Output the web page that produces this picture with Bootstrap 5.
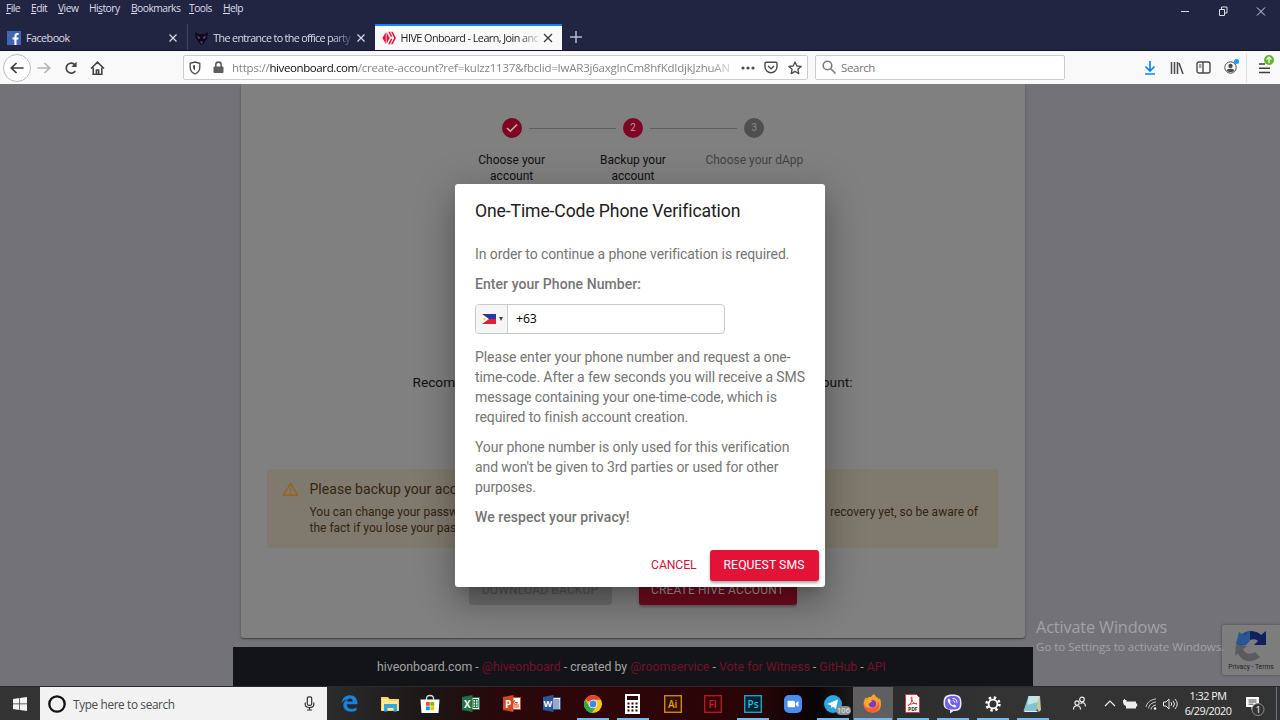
<!DOCTYPE html>
<html lang="en">

<head>
  <meta charset="UTF-8">
  <title>HIVE Onboard - Learn, Join and</title>
  <meta name="viewport" content="width=device-width, initial-scale=1.0" />
  <link href="https://cdn.jsdelivr.net/npm/bootstrap@5.3.0/dist/css/bootstrap.min.css" rel="stylesheet" />
  <style>
    body {
      width: 1280px;
      height: 720px;
      font-family: "Open Sans", "Noto Sans", sans-serif;
      font-size: 11px;
      line-height: 16px;
      background: #737277;
    }

    svg { display: block; flex: none; }

    /* window frame */
    .titlebar { height: 51px; background: #222542; color: #dcdce8; border-bottom: 1px solid #10112b; }
    .menus { height: 24px; padding-left: 6px; font-size: 10.3px; letter-spacing: -.55px; }
    .menus span { line-height: 16px; }
    .menus u { text-underline-offset: 1px; }
    .win-btns { padding: 4px 14px 0 0; gap: 28px; }
    .tabs { height: 26px; }
    .tab { height: 26px; width: 187.3px; padding: 1px 9px 0 7px; font-size: 10.8px; letter-spacing: -.55px; }
    .tab .label { flex: 1; margin: 0 5px 0 5px; white-space: nowrap; overflow: hidden; }
    .tab .fade-end { -webkit-mask-image: linear-gradient(90deg, #000 85%, transparent 103%); }
    .tab.split { border-left: 1px solid #40425c; }
    .tab.split .label { letter-spacing: -.68px; margin-right: 4px; }
    .tab.active { background: #f9f9fa; color: #1c1c22; border-top: 2px solid #0a84ff; padding-top: 0; }

    .toolbar { height: 33px; background: #f9f9fa; color: #4a4a4f; }
    .back { width: 28px; height: 28px; border: 1px solid #bcbcbe; border-radius: 50%; background: #fff; margin-left: 3px; }
    .field { height: 25px; background: #fff; border: 1px solid #ccccce; border-radius: 2px; font-size: 11.5px; }
    .urlbar { width: 625px; margin-left: 78px; padding: 0 5px 0 5px; }
    .urltext { width: 502px; margin: 0 7px 0 8px; color: #85858a; white-space: nowrap; overflow: hidden; letter-spacing: -.22px;
      -webkit-mask-image: linear-gradient(90deg, #000 95%, transparent 101%); }
    .urltext b { font-weight: 400; color: #0c0c0d; letter-spacing: -.4px; }
    .searchbar { width: 250px; margin-left: 7px; padding-left: 6px; color: #77777b; letter-spacing: -.4px; }
    .alert-dot { position: absolute; border-radius: 50%; }

    /* page */
    .viewport { height: 602px; position: relative; overflow: hidden; font-family: Roboto, sans-serif; }
    .page { width: 1265px; }
    .sheet { width: 784px; height: 554px; background: #808080; border-radius: 0 0 3px 3px; padding: 34px 26px 0;
      box-shadow: 0 1px 1px rgba(0, 0, 0, .3), 0 1px 3px rgba(0, 0, 0, .2); }
    .steps { width: 364px; height: 255px; margin-left: 1px; color: #111; font-size: 12px; line-height: 16.7px; }
    .step { flex: 1; position: relative; text-align: center; }
    .step + .step::before { content: ""; position: absolute; top: 10px; left: calc(-50% + 17px); right: calc(50% + 17px); border-top: 1px solid #5f5f5f; }
    .dot { width: 20px; height: 20px; border-radius: 50%; background: #7f0623; color: #b5a0a5; margin: 0 auto 13.5px; font-size: 10px; }
    .step.off { color: #434343; }
    .step.off .dot { background: #4f4f4f; color: #8b8b8b; }
    .step p { width: 80px; margin: 0 auto; }
    .step.off p { width: auto; }
    .recom { width: 440px; height: 96px; color: #111; font-size: 13.7px; line-height: 19px; }
    .notice { width: 731px; height: 79px; background: #807a6e; border-radius: 3px; color: #33240f; padding: 9.5px 20px 0 15px; }
    .notice h6 { font-size: 14px; font-weight: 400; line-height: 20px; margin: 0 0 5px; letter-spacing: .03px; }
    .notice p { font-size: 12px; line-height: 16.7px; margin: 0; letter-spacing: 0; }
    .acts { padding-top: 27px; padding-right: 0; gap: 27px; }
    .act { height: 30px; border-radius: 3px; font-size: 12px; letter-spacing: .15px; line-height: 31px; text-align: center; }
    .act.dl { width: 143px; background: #6d6d6d; color: #525252; }
    .act.create { width: 158px; background: #720a20; color: #a99; box-shadow: 0 2px 2px rgba(0, 0, 0, .25); }
    .foot { width: 800px; height: 40px; margin-top: 9px; background: #121417; color: #a3a3a3; font-size: 12.34px; line-height: 40px; text-align: center; padding-right: 2px; }
    .foot a { color: #75102a; text-decoration: none; }

    .overlay { position: absolute; inset: 0; padding-top: 1px; }
    .dialog { width: 370px; height: 403px; background: #fff; border-radius: 3px; color: #757575; padding: 0 20px;
      font-size: 14px; line-height: 20px; letter-spacing: -.09px;
      box-shadow: 0 9px 12px -6px rgba(0, 0, 0, .2), 0 20px 32px 2px rgba(0, 0, 0, .14), 0 7px 38px 7px rgba(0, 0, 0, .14); }
    .dialog h2 { font-size: 17.6px; line-height: 27px; margin: 14px 0 19px; color: #202020; font-weight: 400; letter-spacing: -.12px; }
    .dialog p { margin: 0 0 10px; }
    .dialog strong { font-weight: 500; letter-spacing: .06px; }
    .phone { width: 250px; height: 30px; border: 1px solid #cacaca; border-radius: 4px; margin-bottom: 13px; color: #000; }
    .country { width: 32px; background: #f5f5f5; border-right: 1px solid #cacaca; border-radius: 3px 0 0 3px; padding-left: 6px; gap: 3px; }
    .phone .num { padding-left: 8px; font-family: "Open Sans", sans-serif; font-size: 12.3px; letter-spacing: -.1px; }
    .dialog .btns { margin: 23px -13.5px 0 0; font-size: 12.2px; letter-spacing: .08px; line-height: 31px; }
    .dialog .cancel { color: #d0103a; margin-right: 13px; letter-spacing: -.1px; }
    .dialog .sms { width: 109px; height: 31px; text-align: center; border-radius: 3px; background: #e31337; color: #fff; box-shadow: 0 2px 3px rgba(0, 0, 0, .35); }

    .activate { position: absolute; left: 1036px; top: 533px; color: #a2a2a6; font-family: "Open Sans", sans-serif; white-space: nowrap; }
    .activate .big { font-size: 16.3px; line-height: 20px; letter-spacing: -.15px; }
    .activate .sub { font-size: 11.6px; line-height: 20px; letter-spacing: -.05px; }
    .captcha { position: absolute; right: 0; top: 541px; width: 58px; height: 50px; background: #7d7d7d; border-radius: 2px 0 0 2px; box-shadow: 0 0 3px #444;
      font-size: 6.7px; line-height: 9px; color: #222; }

    /* taskbar */
    .taskbar { height: 34px; border-top: 1px solid #2a2a2a; color: #f4f4f4;
      background: linear-gradient(90deg, #343434 0, #2b2b2b 330px, #1c1516 430px, #28090b 490px, #2f0508 600px, #270406 760px, #090405 815px, #2c2c2c 890px, #333 1000px); }
    .start { width: 40px; }
    .ask { width: 287px; background: #f2f2f2; color: #4a4a4a; padding: 0 12px 0 8px; font-size: 11.8px; letter-spacing: -.36px; }
    .apps { width: 724px; margin-left: 2px; }
    .app { width: 40px; flex: none; position: relative; }
    .app:nth-child(-n+6) { margin-right: .67px; }
    .app.run::after { content: ""; position: absolute; bottom: 0; left: 4px; right: 4px; height: 2px; background: #76b9ed; }
    .app.on { background: #5f5f60; }
    .app.on::after { left: 1px; right: 1px; }
    .count { position: absolute; right: 2px; bottom: 5px; background: #8b8f92; color: #eee; font-size: 7.5px; line-height: 9px; border-radius: 5px; padding: 0 1px; }
    .tray { margin-left: 19px; width: 104px; }
    .clock { width: 64px; margin-left: 0; font-size: 10.8px; line-height: 15px; text-align: center; letter-spacing: -.5px; padding-top: 1px; }
  </style>
</head>

<body class="m-0 overflow-hidden d-flex flex-column">
  <!-- Title bar -->
  <header class="titlebar">
    <div class="menus d-flex justify-content-between">
      <div class="d-flex">
        <span style="width:25px"><u>F</u>ile</span>
        <span style="width:27px"><u>E</u>dit</span>
        <span style="width:31px"><u>V</u>iew</span>
        <span style="width:42px">Hi<u>s</u>tory</span>
        <span style="width:58px"><u>B</u>ookmarks</span>
        <span style="width:34px"><u>T</u>ools</span>
        <span><u>H</u>elp</span>
      </div>
      <div class="win-btns d-flex">
        <svg width="10" height="14" stroke="#dcdce8" fill="none"><path d="M1 7.5h8" /></svg>
        <svg width="10" height="14" stroke="#dcdce8" fill="none"><path d="M1.500 5.500h5v6h-5zM3.500 5v-2h5.500v6h-2.500" /></svg>
        <svg width="10" height="14" stroke="#dcdce8" fill="none"><path d="M1 3.500l8 8M9 3.500l-8 8" /></svg>
      </div>
    </div>
    <div class="tabs d-flex align-items-center">
      <div class="tab d-flex align-items-center">
        <svg width="14" height="14"><rect width="14" height="14" fill="#4267b2" /><path d="M7.400 14V8.500H5.600V6.400h1.800V5c0-2 1.200-3 2.900-3h1.300v2h-1c-.8 0-1.100.4-1.100 1.100v1.300h2L11.200 8.500H9.500V14z" fill="#fff" /></svg>
        <span class="label">Facebook</span>
        <svg width="10" height="10" stroke="#dcdce8" stroke-width="1.200"><path d="M1.500 1.500l7 7M8.500 1.500l-7 7" /></svg>
      </div>
      <div class="tab split d-flex align-items-center">
        <svg width="13" height="14"><path d="M0 1l3.500 2h6L13 1l-.8 6-3 5L6.500 14 4 12 .8 7z" fill="#0d0a18" /><path d="M2 4.500L5.500 7l-2 .8zM11 4.500L7.500 7l2 .8zM5 10l1.500 1L8 10l-1.500 3z" fill="#a03bb0" /></svg>
        <span class="label fade-end">The entrance to the office party</span>
        <svg width="10" height="10" stroke="#dcdce8" stroke-width="1.200"><path d="M1.500 1.500l7 7M8.500 1.500l-7 7" /></svg>
      </div>
      <div class="tab active d-flex align-items-center">
        <svg width="14" height="14" fill="#e31337"><path d="M3.800 1.200v11.600L.4 7zM4.500 1.200l3.300 5.800-3.300 5.800z" /><path d="M6.200.7h1.700l2.500 5H8.800zM9 .7h1.600L14 7l-3.400 6.300H9L12.200 7zM8.800 7.800h1.600l-2.500 5.500H6.200z" /></svg>
        <span class="label fade-end">HIVE Onboard - Learn, Join and</span>
        <svg width="10" height="10" stroke="#38383d" stroke-width="1.300"><path d="M1 1l8 8M9 1L1 9" /></svg>
      </div>
      <svg class="ms-2" width="12" height="12" stroke="#b9bacb" stroke-width="1.500"><path d="M6 0v12M0 6h12" /></svg>
    </div>
  </header>

  <!-- Navigation toolbar -->
  <nav class="toolbar d-flex align-items-center">
    <div class="back d-flex align-items-center justify-content-center">
      <svg width="14" height="12" fill="none" stroke="#3c3c40" stroke-width="1.700"><path d="M13.500 6H1M6.500 1L1.300 6l5.200 5" /></svg>
    </div>
    <svg style="margin-left:6px" width="14" height="12" fill="none" stroke="#b4b4b6" stroke-width="1.600"><path d="M.5 6H13M7.500 1l5.200 5-5.200 5" /></svg>
    <svg style="margin-left:13px" width="14" height="14" fill="none" stroke="#46464a" stroke-width="1.700"><path d="M11.300 10a5 5 0 1 1-.3-6.200" /><path d="M12.600.800v5.300H7.300z" fill="#46464a" stroke="none" /></svg>
    <svg style="margin-left:12px" width="15" height="14" fill="none" stroke="#46464a" stroke-width="1.600"><path d="M1 7.500L7.500 1.200 14 7.500M3.200 6.500v6.700h8.600V6.500M6.400 13V9h2.200v4" /></svg>
    <div class="field urlbar d-flex align-items-center">
      <svg width="12" height="14" fill="none" stroke="#4a4a4f" stroke-width="1.300"><path d="M6 1l4.800 1.300v4c0 3.200-2 5.500-4.800 6.700C3.200 11.800 1.200 9.500 1.200 6.300v-4z" /><path d="M6 4v5.500C4.600 8.500 4 7.500 4 6V4.500z" fill="#4a4a4f" stroke="none" /></svg>
      <svg style="margin-left:12px" width="11" height="13"><path d="M1.500 5.500h8q1 0 1 1V11q0 1-1 1h-8q-1 0-1-1V6.500q0-1 1-1z" fill="#5d5d61" /><path d="M2.800 6V3.800a2.700 2.700 0 0 1 5.400 0V6" fill="none" stroke="#5d5d61" stroke-width="1.600" /></svg>
      <div class="urltext">https://<b>hiveonboard.com</b>/create-account?ref=kulzz1137&amp;fbclid=IwAR3j6axgInCm8hfKdIdjkJzhuAN</div>
      <svg width="14" height="4" fill="#4a4a4f"><circle cx="2" cy="2" r="1.600" /><circle cx="7" cy="2" r="1.600" /><circle cx="12" cy="2" r="1.600" /></svg>
      <svg style="margin-left:9px" width="14" height="13" fill="none" stroke="#4a4a4f" stroke-width="1.400"><path d="M2.200 1.200h9.600q1.200 0 1.200 1.200v3.400c0 3.500-2.800 6-6 6s-6-2.500-6-6V2.400q0-1.200 1.200-1.200z" /><path d="M4 5l3 2.700L10 5" /></svg>
      <svg style="margin-left:10px" width="14" height="14" fill="none" stroke="#4a4a4f" stroke-width="1.300" stroke-linejoin="round"><path d="M7 1l1.800 4 4.300.4-3.200 2.900.9 4.300L7 10.400l-3.800 2.200.9-4.300L.9 5.400 5.200 5z" /></svg>
    </div>
    <div class="field searchbar d-flex align-items-center">
      <svg width="15" height="15" fill="none" stroke="#7b7b7f" stroke-width="1.600"><circle cx="5.500" cy="5.500" r="4.300" /><path d="M8.700 8.700L13.500 13.500" /></svg>
      <span class="ms-1">Search</span>
    </div>
    <svg style="margin-left:79px" width="12" height="14" fill="none" stroke="#0a84ff" stroke-width="1.700"><path d="M6 0v9.500M1.500 5.500L6 10l4.500-4.500M1 13h10" /></svg>
    <svg style="margin-left:14px" width="14" height="14" fill="none" stroke="#4a4a4f" stroke-width="1.500"><path d="M1.500 1v12M4.500 1v12M7.500 1v12M9 2l4 11" /></svg>
    <svg style="margin-left:12px" width="15" height="13" fill="none" stroke="#4a4a4f" stroke-width="1.400"><rect x="1" y="1" width="13" height="11" rx="2" /><path d="M7 1v11" /><path d="M3 4h2.500M3 6h2.500" stroke-width="1" /></svg>
    <div class="position-relative" style="margin-left:13px">
      <svg width="13" height="13" fill="none" stroke="#4a4a4f"><circle cx="6.500" cy="6.500" r="5.700" /><circle cx="6.500" cy="4.900" r="2.200" fill="#4a4a4f" stroke="none" /><path d="M2.600 9.500c1-2.300 6.800-2.300 7.800 0-1.500 2.200-6.300 2.200-7.800 0z" fill="#4a4a4f" stroke="none" /></svg>
      <span class="alert-dot" style="width:5px;height:5px;background:#0a9dfc;right:-2px;top:-2px"></span>
    </div>
    <div class="position-relative d-flex align-items-center border-start" style="margin-left:9px;height:30px;padding-left:12px">
      <svg width="11" height="12" stroke="#3f3f43" stroke-width="1.500"><path d="M0 2h6M0 6.200h11M0 10.500h11" /></svg>
      <span class="alert-dot d-flex align-items-center justify-content-center" style="width:10px;height:10px;background:#5fb82c;left:17px;top:2px">
        <svg width="6" height="7" fill="none" stroke="#fff" stroke-width="1.200"><path d="M3 7V1M.5 3.500L3 1l2.500 2.500" /></svg>
      </span>
    </div>
  </nav>

  <!-- Page -->
  <main class="viewport">
    <div class="page d-flex flex-column align-items-center">
      <section class="sheet d-flex flex-column align-items-center">
        <div class="steps d-flex">
          <div class="step">
            <div class="dot d-flex align-items-center justify-content-center"><svg width="12" height="10" fill="none" stroke="#c4b4b8" stroke-width="1.500"><path d="M1 5l3.300 3.300L11 1.500" /></svg></div>
            <p>Choose your account</p>
          </div>
          <div class="step">
            <div class="dot d-flex align-items-center justify-content-center">2</div>
            <p>Backup your account</p>
          </div>
          <div class="step off">
            <div class="dot d-flex align-items-center justify-content-center">3</div>
            <p>Choose your dApp</p>
          </div>
        </div>
        <div class="recom d-flex justify-content-between"><span>Recom</span><span>ount:</span></div>
        <div class="notice d-flex">
          <svg style="margin-top:3px" width="17" height="14" fill="none" stroke="#9b6114" stroke-width="1.400"><path d="M8.500 1.500l7 11.500h-14zM8.500 5.500v3.800M8.500 10.400v1.300" /></svg>
          <div class="flex-grow-1" style="margin-left:10.500px">
            <h6>Please backup your acco</h6>
            <p class="d-flex justify-content-between"><span>You can change your passw</span><span>recovery yet, so be aware of</span></p>
            <p>the fact if you lose your pas</p>
          </div>
        </div>
        <div class="acts d-flex">
          <div class="act dl">DOWNLOAD BACKUP</div>
          <div class="act create">CREATE HIVE ACCOUNT</div>
        </div>
      </section>
      <footer class="foot">hiveonboard.com - <a href="#">@hiveonboard</a> - created by <a href="#">@roomservice</a> - <a href="#">Vote for Witness</a> - <a href="#">GitHub</a> - <a href="#">API</a></footer>
    </div>

    <div class="captcha d-flex flex-column align-items-center">
      <svg width="34" height="34" viewBox="0 0 34 34" style="margin-top:4px"><path d="M2 15C3 8 8 3 16 2v9l-4 5-6 1z" fill="#244a86" /><path d="M5 3l5 4 6-5v10l-5 4-9-1z" fill="#2a5596" /><path d="M16 2c5 0 8 1 11 4l5-4v14H20l4-4c-2-2-5-2-8-1z" fill="#101f5e" /><path d="M2 16l11 1-4 3c2 5 7 6 12 3l5 5C18 35 7 33 4 24l-3 3z" fill="#5b5b5d" /></svg>
      <span>Privacy - Terms</span>
    </div>
    <div class="activate">
      <div class="big">Activate Windows</div>
      <div class="sub">Go to Settings to activate Windows.</div>
    </div>

    <!-- Phone verification dialog -->
    <div class="overlay d-flex align-items-center justify-content-center">
      <div class="dialog d-flex flex-column">
        <h2>One-Time-Code Phone Verification</h2>
        <p>In order to continue a phone verification is required.</p>
        <p><strong>Enter your Phone Number:</strong></p>
        <div class="phone d-flex">
          <div class="country d-flex align-items-center">
            <svg width="14" height="10"><path d="M0 0h14v5H0z" fill="#2a35a8" /><path d="M0 5h14v5H0z" fill="#e0202c" /><path d="M0 0l7 5-7 5z" fill="#fff" /><circle cx="2.300" cy="5" r="1.200" fill="#f3d14a" /></svg>
            <svg width="4" height="4"><path d="M0 0h4L2 4z" fill="#444" /></svg>
          </div>
          <div class="num d-flex align-items-center">+63</div>
        </div>
        <p>Please enter your phone number and request a one-<br>time-code. After a few seconds you will receive a SMS<br>message containing your one-time-code, which is<br>required to finish account creation.</p>
        <p>Your phone number is only used for this verification<br>and won't be given to 3rd parties or used for other<br>purposes.</p>
        <p class="mb-0"><strong>We respect your privacy!</strong></p>
        <div class="btns d-flex justify-content-end">
          <span class="cancel">CANCEL</span>
          <span class="sms">REQUEST SMS</span>
        </div>
      </div>
    </div>
  </main>

  <!-- Taskbar -->
  <footer class="taskbar d-flex">
    <div class="start d-flex align-items-center justify-content-center">
      <svg width="14" height="14" fill="#f4f4f4"><path d="M0 2l6.300-.9v5.500H0zM7 1l7-1v6.600H7zM0 7.300h6.300v5.600L0 12zM7 7.300h7V14l-7-1z" /></svg>
    </div>
    <div class="ask d-flex align-items-center">
      <svg width="18" height="18" fill="none" stroke="#111"><circle cx="9" cy="9" r="7.700" stroke-width="2.300" /></svg>
      <span class="flex-grow-1" style="margin-left:7px">Type here to search</span>
      <svg width="11" height="15" fill="none" stroke="#333" stroke-width="1.200"><rect x="3.300" y=".8" width="4.400" height="8.500" rx="1.500" /><path d="M1.200 6.500v2q0 3 4.300 3t4.300-3v-2M5.500 11.500V14M3 14h5" /></svg>
    </div>
    <div class="apps d-flex">
      <div class="app d-flex align-items-center justify-content-center">
        <svg width="17" height="17"><path d="M.5 8C1.500 2.500 5 .3 9 .3c4.800 0 7.700 3.500 7.500 9H5.800c0 5.200 6 5.500 9.700 3v3.300C9 18.500 2 16 2.300 10 2.400 7.500 4 5.500 6.300 4.500 3.800 4.700 2 6 .5 8zm5.500-1.500h5.800c0-4.300-5.500-4-5.800 0z" fill="#1583dd" /></svg>
      </div>
      <div class="app d-flex align-items-center justify-content-center">
        <svg width="18" height="16"><path d="M0 1h7l1.500 2H18v12H0z" fill="#f6d568" /><path d="M1 3h6.500l1 2H17v9H1z" fill="#fde794" /><path d="M3 8h13v7.500h-3.500V12h-6v3.500H3z" fill="#37a4dc" /></svg>
      </div>
      <div class="app d-flex align-items-center justify-content-center">
        <svg width="20" height="20"><path d="M6.500 7V4.500q0-3 3.500-3t3.500 3V7" fill="none" stroke="#ddd" stroke-width="1.300" /><path d="M.5 5.500h19L18.500 19h-17z" fill="#fff" /><path d="M6 8h3.800v3.800H6z" fill="#f25022" /><path d="M10.400 8h3.800v3.800h-3.800z" fill="#7fba00" /><path d="M6 12.400h3.800v3.800H6z" fill="#00a4ef" /><path d="M10.400 12.400h3.800v3.800h-3.800z" fill="#ffb900" /></svg>
      </div>
      <div class="app d-flex align-items-center justify-content-center">
        <svg width="18" height="17"><path d="M9 2.500h8.500v12H9z" fill="#fff" stroke="#217346" /><path d="M11 4.500h5v8h-5zM13.500 4v9M11 7h5M11 10h5" fill="none" stroke="#217346" /><path d="M0 2l10.500-2v17L0 15z" fill="#217346" /><text x="2" y="12.500" font-size="10" font-weight="700" fill="#fff">X</text></svg>
      </div>
      <div class="app d-flex align-items-center justify-content-center">
        <svg width="18" height="17"><path d="M9 2.500h8.500v12H9z" fill="#fff" stroke="#d24726" /><path d="M11 10h5M11 12h5M11.500 5.500a2 2 0 1 0 3 2h-2.500z" fill="none" stroke="#d24726" /><path d="M0 2l10.500-2v17L0 15z" fill="#d24726" /><text x="2" y="12.500" font-size="10" font-weight="700" fill="#fff">P</text></svg>
      </div>
      <div class="app d-flex align-items-center justify-content-center">
        <svg width="18" height="17"><path d="M9 2.500h8.500v12H9z" fill="#fff" stroke="#2b579a" /><path d="M11 5h5.500M11 7h5.500M11 9h5.500M11 11h5.500M11 13h5.500" fill="none" stroke="#2b579a" /><path d="M0 2l10.500-2v17L0 15z" fill="#2b579a" /><text x=".5" y="12" font-size="9" font-weight="700" fill="#fff">W</text></svg>
      </div>
      <div class="app run d-flex align-items-center justify-content-center">
        <svg width="18" height="18" viewBox="0 0 18 18"><circle cx="9" cy="9" r="9" fill="#fbc816" /><path d="M9 9L1.200 4.500A9 9 0 0 1 16.800 4.800H9z" fill="#e04435" /><path d="M1.200 4.500A9 9 0 0 0 8 18l4-6.800-6.700.2z" fill="#33a653" /><circle cx="9" cy="9" r="4.300" fill="#fff" /><circle cx="9" cy="9" r="3.400" fill="#4285f4" /></svg>
      </div>
      <div class="app run d-flex align-items-center justify-content-center">
        <svg width="15" height="20"><path d="M0 0h15v20H0z" fill="#fff" /><path d="M2 2h11v4H2z" fill="#2a0707" /><path d="M2.500 9.500h10.500M2.500 13h10.500M2.500 16.500h10.500" stroke="#2a0707" stroke-width="2" stroke-dasharray="2 2" /></svg>
      </div>
      <div class="app d-flex align-items-center justify-content-center">
        <svg width="18" height="18"><rect x=".7" y=".7" width="16.600" height="16.600" fill="#2b1300" stroke="#d9820f" stroke-width="1.400" /><text x="4" y="12.700" font-size="10" font-weight="600" fill="#f09316">Ai</text></svg>
      </div>
      <div class="app d-flex align-items-center justify-content-center">
        <svg width="18" height="18"><rect x=".7" y=".7" width="16.600" height="16.600" fill="#350307" stroke="#ad1c24" stroke-width="1.400" /><text x="4.500" y="12.700" font-size="10" font-weight="600" fill="#c8202a">Fl</text></svg>
      </div>
      <div class="app run d-flex align-items-center justify-content-center">
        <svg width="18" height="18"><rect x=".7" y=".7" width="16.600" height="16.600" fill="#03212e" stroke="#14a5cc" stroke-width="1.400" /><text x="3.500" y="12.700" font-size="10" font-weight="600" fill="#22c3ea">Ps</text></svg>
      </div>
      <div class="app d-flex align-items-center justify-content-center">
        <svg width="18" height="18"><rect width="18" height="18" rx="5" fill="#4a8cf0" /><path d="M3.500 6.500q0-.8.8-.8h5.200q1.500 0 1.500 1.500v5H5q-1.500 0-1.500-1.500zM11.700 8l2.800-2v6l-2.800-2z" fill="#fff" /></svg>
      </div>
      <div class="app run d-flex align-items-center justify-content-center">
        <svg width="18" height="18"><circle cx="9" cy="9" r="9" fill="#2ca5e0" /><path d="M3 9l11-4.500L12 14l-3-2.200-1.500 1.500-.5-3z" fill="#fff" /></svg>
        <span class="count">106</span>
      </div>
      <div class="app run on d-flex align-items-center justify-content-center">
        <svg width="19" height="19" viewBox="0 0 19 19"><path d="M.7 9C.8 6.500 2 4.500 3.200 3l.5 2C5 3 7 2.700 8 3c1.500-2.500 3-2.700 4-2.500-.5 2 3 3 4 5l.8-1.500C19 9 19 18.500 9.500 18.500 4 18.500.6 14.500.7 9z" fill="#ffa526" /><path d="M.7 9c1 4 4 5.500 8.500 5 5 0 6-4 5.500-7 3.500 4 1.500 11.500-5.200 11.500C4 18.500.6 14.500.7 9z" fill="#fb5b3b" /><circle cx="9.500" cy="9.700" r="3.700" fill="#7a3ad0" /><path d="M4 6c2-1 4 .3 5.500 1-1 1.500-3 1-3 3z" fill="#ffb52d" /></svg>
      </div>
      <div class="app run d-flex align-items-center justify-content-center">
        <svg width="15" height="19"><path d="M.5.500h11l3 3v15H.5z" fill="#fff" stroke="#cf3d3c" /><path d="M3 11.500c3-1.500 4.500-5 4-8-.5-1-1.500 0-.5 2 1 2.500 3 4.500 5.500 4.500-1.500-1.200-6-.5-9 1.500z" fill="none" stroke="#d83a35" /><text x="3" y="16.800" font-size="5" font-weight="700" fill="#222">PDF</text></svg>
      </div>
      <div class="app run d-flex align-items-center justify-content-center">
        <svg width="19" height="20"><path d="M9.500.5c6.500 0 9 2 9 8.500s-2.500 8-8 8L7 19.500V16C2 15 .5 13 .5 9c0-6.500 2.500-8.500 9-8.500z" fill="#eee9ff" /><path d="M9.500 2c5.500 0 7.500 1.500 7.500 7s-2 6.500-7.500 6.500S2 14 2 9s2-7 7.500-7z" fill="#7360f2" /><path d="M6 4.500L7.700 7l-.7 1.200c.6 1.600 1.500 2.500 3 3l1.200-.8L13.500 12c-.3 1.300-1.500 1.800-3 1C7.500 11.700 5.500 9.500 4.800 7c-.4-1.300.2-2.200 1.200-2.500z" fill="#fff" /><path d="M9.500 4.500c3 0 4.500 1.500 4.500 4.300M9.800 6.700c1.400 0 2 .7 2 2" stroke="#fff" fill="none" /></svg>
      </div>
      <div class="app run d-flex align-items-center justify-content-center">
        <svg width="16" height="16" fill="none" stroke="#fff"><circle cx="8" cy="8" r="6.400" stroke-width="2.600" stroke-dasharray="2.400 2.626" /><circle cx="8" cy="8" r="4.400" stroke-width="1.800" /></svg>
      </div>
      <div class="app run d-flex align-items-center justify-content-center">
        <svg width="19" height="18"><path d="M6 1h11l1 14-2 2z" fill="#d0c49d" /><path d="M5.500 1H16l-2.500 15H.5z" fill="#7fc4cf" /><path d="M5.500 1H16l-1 6-10.500 3z" fill="#c2e4e5" /><path d="M.5 16h13l2 1H2z" fill="#eee" /></svg>
      </div>
    </div>
    <div class="tray d-flex align-items-center">
      <svg width="15" height="15" fill="none" stroke="#eee" stroke-width="1.200"><circle cx="10" cy="3.500" r="2.300" /><circle cx="5" cy="7" r="2.100" /><path d="M1.500 13.500c0-5 7-5 7 0M8.500 7.800c2.200-2.300 5-.8 5 2.700" /></svg>
      <svg style="margin-left:17px" width="12" height="7" fill="none" stroke="#eee" stroke-width="1.200"><path d="M1 6l5-5 5 5" /></svg>
      <svg style="margin-left:7px" width="15" height="10" fill="#eee"><path d="M3 2.500h10v2h1.200v3H13v2H3V7C0 6 0 3 0 1h1V0h1v1h1.500v1z" /></svg>
      <svg style="margin-left:7px" width="12" height="12" fill="none" stroke="#ccc"><path d="M1 9C2 4.500 5.500 1.500 11 1M3.500 10.500c.5-3.500 3-6 7.500-6.500M6 11.500c.3-2.500 2-4 5-4.500" /><circle cx="10" cy="10.500" r="1.200" fill="#fff" stroke="none" /></svg>
      <svg style="margin-left:6px" width="15" height="12" fill="none" stroke="#e6e6e6"><path d="M.500 4h2.500l3-3v10L3 8H.500zM8 4.200q1.500 1.800 0 3.600M10 2.700q3 3.300 0 6.600M12 1q4.500 5 0 10" /></svg>
    </div>
    <div class="clock">1:32 PM<br>6/29/2020</div>
    <div class="position-relative" style="margin:9px 0 0 5px;width:22px">
      <svg width="22" height="22"><path d="M1 1h13v10H9l-2.500 3v-3H1z" fill="#fff" /><path d="M3.500 4h8M3.500 6h8M3.500 8.200h5" stroke="#444" /><circle cx="13" cy="13.500" r="6" fill="#333" stroke="#8c8c8c" /><text x="10.500" y="17" font-size="9.500" fill="#fff">1</text></svg>
    </div>
    <div class="ms-auto border-start border-secondary" style="width:4px"></div>
  </footer>

  <script src="https://cdn.jsdelivr.net/npm/bootstrap@5.3.0/dist/js/bootstrap.bundle.min.js"></script>
</body>

</html>
